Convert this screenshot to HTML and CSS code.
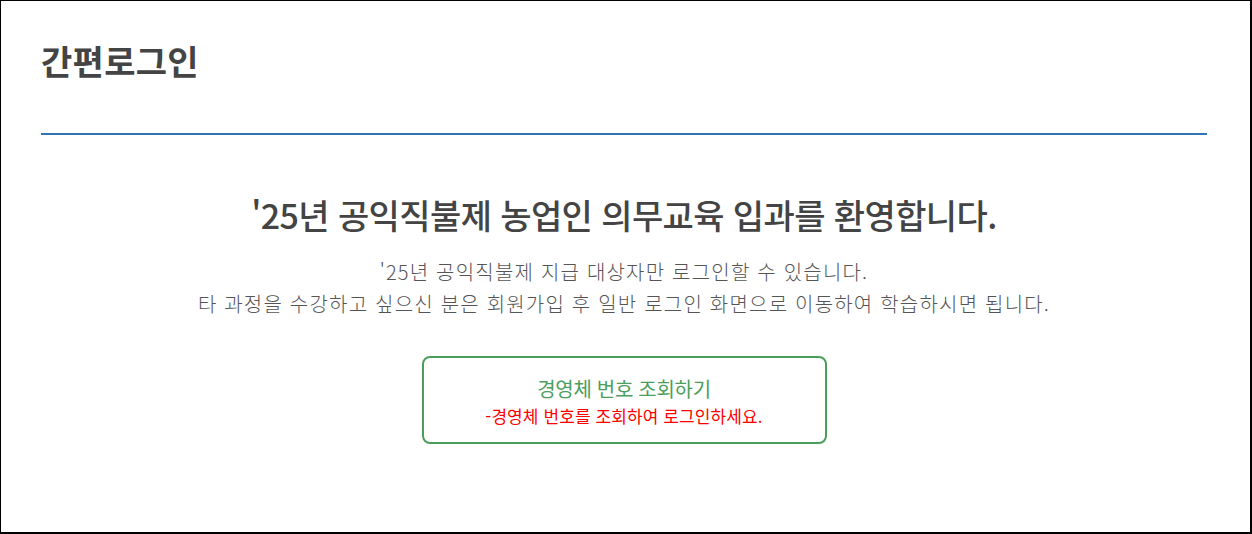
FILE: index.html
```html
<!DOCTYPE html>
<html lang="ko">
<head>
    <meta charset="UTF-8">
    <meta name="viewport" content="width=device-width, initial-scale=1.0">
    <title>간편로그인</title>
    <link rel="stylesheet" href="styles.css">
</head>
<body>
    <div class="frame">
        <h1 class="page-title">간편로그인</h1>

        <div class="welcome">
            <h2>'25년 공익직불제 농업인 의무교육 입과를 환영합니다.</h2>
            <p>'25년 공익직불제 지급 대상자만 로그인할 수 있습니다.<br>
            타 과정을 수강하고 싶으신 분은 회원가입 후 일반 로그인 화면으로 이동하여 학습하시면 됩니다.</p>

            <a href="#" class="lookup-btn">
                <span class="lookup-title">경영체 번호 조회하기</span>
                <span class="lookup-note">-경영체 번호를 조회하여 로그인하세요.</span>
            </a>
        </div>
    </div>
</body>
</html>
```

FILE: styles.css
```css
html, body {
    margin: 0;
    padding: 0;
    background: #fff;
}
body {
    font-family: "Noto Sans CJK KR", "Noto Sans", sans-serif;
    color: #444;
}
.frame {
    box-sizing: border-box;
    width: 1252px;
    height: 534px;
    border: 1px solid #000;
    border-right-width: 2px;
    border-bottom-width: 2px;
    padding: 0 43px 0 40px;
}
.page-title {
    margin: 0;
    padding: 32px 0 44px;
    font-size: 34px;
    font-weight: 700;
    letter-spacing: 0.3px;
    line-height: 56px;
    color: #444;
    border-bottom: 2px solid #2f75b5;
}
.welcome {
    text-align: center;
    padding-top: 56px;
}
.welcome h2 {
    margin: 0;
    font-size: 34px;
    font-weight: 500;
    letter-spacing: -0.6px;
    line-height: 48px;
    color: #444;
}
.welcome p {
    margin: 17px 0 0;
    font-size: 20px;
    font-weight: 300;
    line-height: 32px;
    letter-spacing: 1.2px;
    color: #555;
}
.lookup-btn {
    display: flex;
    flex-direction: column;
    align-items: center;
    box-sizing: border-box;
    width: 405px;
    height: 88px;
    margin: 36px auto 0;
    padding-top: 16px;
    border: 2px solid #4b9e5b;
    border-radius: 8px;
    text-decoration: none;
}
.lookup-title {
    font-size: 20px;
    line-height: 30px;
    color: #4b9e5b;
    letter-spacing: -0.3px;
}
.lookup-note {
    font-size: 17px;
    line-height: 24px;
    font-weight: 400;
    color: #f00;
    letter-spacing: 0.1px;
}
```
